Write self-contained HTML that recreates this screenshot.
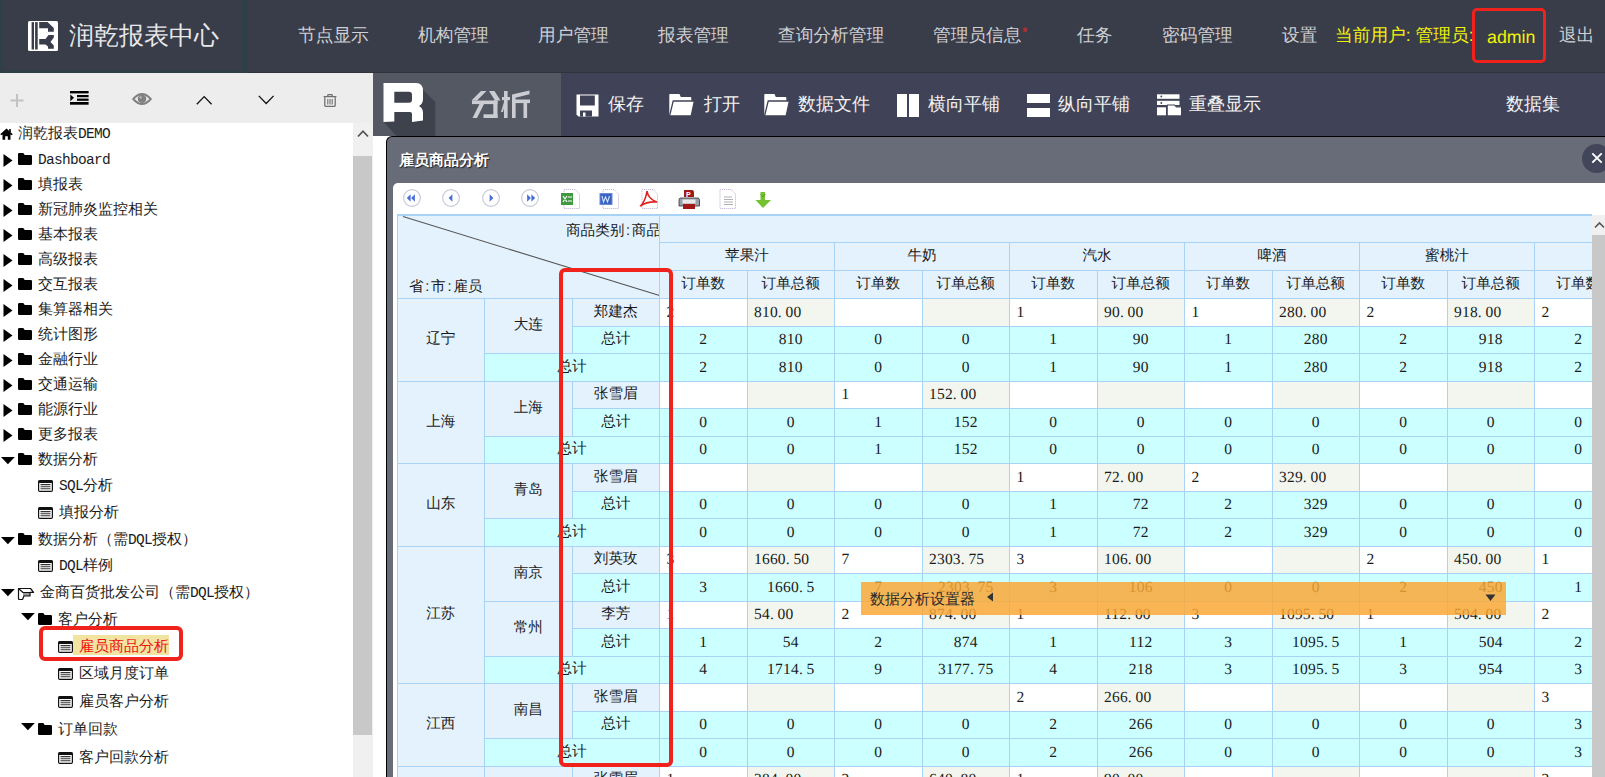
<!DOCTYPE html><html><head><meta charset="utf-8"><style>
*{margin:0;padding:0;box-sizing:border-box}
html,body{width:1605px;height:777px;overflow:hidden;background:#fff;font-family:"Liberation Sans",sans-serif}
.ab{position:absolute}
.nav{position:absolute;top:22px;font-size:17.7px;text-rendering:geometricPrecision;color:#cfd0d4;line-height:26px;white-space:nowrap}
.tb{position:absolute;top:91.3px;font-size:17.6px;color:#f2f2f2;line-height:26px;white-space:nowrap}
.tr{position:absolute;left:0;font-size:15px;color:#1c1c1c;line-height:20px;white-space:nowrap}
.c{position:absolute;font-size:14.6px;text-rendering:geometricPrecision;color:#1a1a1a;white-space:nowrap;overflow:hidden;display:flex;align-items:center}
.mono{font-family:"Liberation Mono",monospace;font-size:14.5px;letter-spacing:-0.7px}
.m{font-family:"Liberation Serif",serif;font-size:15.5px;letter-spacing:0.2px}
</style></head><body>

<div class="ab" style="left:0;top:0;width:1605px;height:73px;background:#393d49;border-bottom:1px solid #30333c"></div>
<div class="ab" style="left:0;top:0;width:248px;height:73px;border-left:3px solid #2f3f46;border-right:6px solid #2f3f46;border-bottom:3px solid #2f3f46;background:#393d49"></div>
<svg class="ab" style="left:28px;top:21px" width="30" height="30" viewBox="0 0 30 30">
<rect x="0" y="0" width="30" height="30" rx="1.5" fill="#fff"/>
<rect x="3.6" y="1.1" width="2.4" height="27.4" fill="#393d49"/>
<rect x="7.1" y="1.1" width="2.6" height="27.4" fill="#393d49"/>
<path d="M11.2,1.1 H19.5 L25.8,7 V10.7 H20 V7.2 H11.2 Z" fill="#393d49"/>
<path d="M11.2,18 H17.5 L20.5,14 H25.8 V16.5 L22.5,21 L25.8,24.5 V27.8 H20 V25.5 L17.5,23.4 H11.2 Z" fill="#393d49"/>
</svg>
<div class="ab" style="left:69px;top:17px;font-size:25px;line-height:36px;color:#e8e8ea;font-weight:300;letter-spacing:0px;white-space:nowrap">润乾报表中心</div>
<div class="nav" style="left:298px">节点显示</div>
<div class="nav" style="left:418px">机构管理</div>
<div class="nav" style="left:538px">用户管理</div>
<div class="nav" style="left:658px">报表管理</div>
<div class="nav" style="left:778px">查询分析管理</div>
<div class="nav" style="left:933px">管理员信息</div>
<div class="nav" style="left:1077px">任务</div>
<div class="nav" style="left:1162px">密码管理</div>
<div class="nav" style="left:1282px">设置</div>
<div class="ab" style="left:1022px;top:22px;font-size:14px;color:#e8262a;line-height:20px">*</div>
<div class="nav" style="left:1335px;color:#f2f20a">当前用户: 管理员:</div>
<div class="nav" style="left:1487px;top:24px;color:#f2f20a;font-size:17.8px">admin</div>
<div class="nav" style="left:1559px">退出</div>
<div class="ab" style="left:1471.5px;top:7.5px;width:74px;height:55.5px;border:3.5px solid #f0221c;border-radius:5px"></div>
<div class="ab" style="left:0;top:73px;width:373px;height:50px;background:#ededed"></div>
<div class="ab" style="left:373px;top:73px;width:1232px;height:63px;background:#404357"></div>
<div class="ab" style="left:373px;top:73px;width:188px;height:63px;background:#535863"></div>
<svg class="ab" style="left:373px;top:73px" width="70" height="63" viewBox="0 0 70 63">
<path d="M45,12 L62.3,29 V63 H23.5 L10.5,49 Z" fill="#3e424d"/><rect x="20" y="18" width="20" height="12.5" fill="#3e424d"/>
<path fill-rule="evenodd" fill="#fff" d="M10.5,10 H43 Q50,10 50,18 V26 Q50,31 46,33 Q50,35 50,40 V47.5 L39,49 V41 Q39,39 37,39 H21.3 V48.5 L10.5,49 Z M21.3,18.8 H36 Q39,18.8 39,22 V26.5 Q39,29.7 36,29.7 H21.3 Z"/>
</svg>
<svg class="ab" style="left:470px;top:89px" width="62" height="31" viewBox="0 0 62 31" fill="#cbcdd2">
<path d="M1.5,11.5 L11,2 H16.5 L7,11.5 Z"/>
<path d="M19,2 H24.5 L30.5,11.5 H25 Z"/>
<rect x="2" y="11.5" width="25.5" height="3.6"/>
<rect x="23.3" y="11.5" width="4.2" height="17.5"/>
<rect x="13.5" y="25.3" width="14" height="3.7"/>
<path d="M9.5,15 H14 L7,29 H2.5 Z"/>
<rect x="34" y="2" width="3.6" height="27"/>
<rect x="32" y="8" width="8" height="3.2"/>
<path d="M34,13 H35.5 L33,23 H31 Z"/>
<path d="M42,5.5 L59.5,1.5 V5.2 L45.5,8.8 Z"/>
<rect x="42" y="6" width="3.6" height="23"/>
<rect x="45" y="10.5" width="15" height="3.6"/>
<rect x="53.5" y="13" width="3.6" height="16"/>
</svg>
<svg class="ab" style="left:575.5px;top:93.5px" width="23" height="23" viewBox="0 0 23 23">
<path d="M0.5,0.5 H22.5 V22.5 H2.5 L0.5,20.5 Z" fill="#fff"/>
<rect x="4" y="1.5" width="14.8" height="10" fill="#404357"/>
<rect x="4" y="16.5" width="12" height="6" fill="#404357"/>
<rect x="7" y="18.5" width="2.5" height="4" fill="#fff"/>
</svg>
<div class="tb" style="left:607.8px">保存</div>
<svg class="ab" style="left:669px;top:94px" width="26" height="22" viewBox="0 0 26 22">
<path d="M0.3,0.8 Q0.3,0 1,0 H10.5 L11.8,3 H21.5 Q22.3,3 22.3,4 V21.7 H0.3 Z" fill="#fff"/>
<path d="M4.2,7 H25.4 L22.2,21.8 H0.6 Z" fill="#fff" stroke="#404357" stroke-width="1.3"/>
</svg>
<div class="tb" style="left:703.6px">打开</div>
<svg class="ab" style="left:764px;top:94px" width="26" height="22" viewBox="0 0 26 22">
<path d="M0.3,0.8 Q0.3,0 1,0 H10.5 L11.8,3 H21.5 Q22.3,3 22.3,4 V21.7 H0.3 Z" fill="#fff"/>
<path d="M4.2,7 H25.4 L22.2,21.8 H0.6 Z" fill="#fff" stroke="#404357" stroke-width="1.3"/>
</svg>
<div class="tb" style="left:797.8px">数据文件</div>
<div class="ab" style="left:897px;top:94px;width:10px;height:22.5px;background:#fff"></div>
<div class="ab" style="left:909px;top:94px;width:10px;height:22.5px;background:#fff"></div>
<div class="tb" style="left:927.8px">横向平铺</div>
<div class="ab" style="left:1027px;top:94px;width:22.5px;height:8.5px;background:#fff"></div>
<div class="ab" style="left:1027px;top:107.5px;width:22.5px;height:9px;background:#fff"></div>
<div class="tb" style="left:1057.7px">纵向平铺</div>
<svg class="ab" style="left:1157px;top:93.5px" width="25" height="22" viewBox="0 0 25 22">
<rect x="0" y="0.3" width="22.5" height="4.5" fill="#fff"/>
<rect x="0" y="6.8" width="22.5" height="4.2" fill="#fff"/>
<circle cx="4.3" cy="2.5" r="0.9" fill="#404357"/><circle cx="4.3" cy="9" r="0.9" fill="#404357"/>
<rect x="0" y="13.3" width="9" height="8" fill="#fff"/>
<path d="M10.8,21.3 V11 H18 L20,12.5 H24 V21.3 Z" fill="#fff" stroke="#404357" stroke-width="0"/>
<path d="M10,11 H17.5 L19.5,12.8 H25" fill="none" stroke="#404357" stroke-width="1.2"/>
</svg>
<div class="tb" style="left:1188.8px">重叠显示</div>
<div class="tb" style="left:1506px">数据集</div>
<div class="ab" style="left:386px;top:136px;width:1240px;height:660px;background:#686c78;border-top:1px solid #000;border-left:1px solid #000;border-radius:6px 0 0 0"></div>
<div class="ab" style="left:399px;top:150px;font-size:14.5px;line-height:20px;font-weight:bold;color:#fff;white-space:nowrap;text-shadow:1px 1px 1px #1e2026">雇员商品分析</div>
<div class="ab" style="left:1582px;top:144px;width:29px;height:29px;border-radius:14.5px;background:#42465a"></div>
<svg class="ab" style="left:1590.5px;top:152px" width="12" height="12" viewBox="0 0 12 12"><path d="M1.3,1.3 L10.7,10.7 M10.7,1.3 L1.3,10.7" stroke="#fff" stroke-width="1.9"/></svg>
<div class="ab" style="left:393px;top:183px;width:1240px;height:620px;background:#fff;border-radius:5px 0 0 0"></div>
<svg class="ab" style="left:10px;top:94px" width="14" height="13" viewBox="0 0 14 13"><path d="M7,0 V13 M0.5,6.5 H13.5" stroke="#c2c2c2" stroke-width="2"/></svg>
<svg class="ab" style="left:70px;top:90px" width="19" height="15" viewBox="0 0 19 15">
<rect x="0" y="1" width="18.6" height="2.4" fill="#000"/>
<rect x="7" y="5" width="11.6" height="2.2" fill="#000"/>
<rect x="7" y="8.6" width="11.6" height="2.2" fill="#000"/>
<rect x="0" y="12" width="18.6" height="2.7" fill="#000"/>
<path d="M0.3,4.5 L4,7.8 L0.3,11.2 Z" fill="#000"/>
</svg>
<svg class="ab" style="left:132px;top:92px" width="20" height="14" viewBox="0 0 20 14">
<path d="M1.2,7 Q10,-3 18.8,7 Q10,17 1.2,7 Z" fill="none" stroke="#808080" stroke-width="1.9"/>
<circle cx="10" cy="6.8" r="4.3" fill="#808080"/><circle cx="8.6" cy="5.4" r="1.2" fill="#b8b8b8"/>
</svg>
<svg class="ab" style="left:196px;top:95px" width="17" height="10" viewBox="0 0 17 10"><path d="M0.8,9.2 L8.2,1.6 L15.6,9.2" fill="none" stroke="#111" stroke-width="1.3"/></svg>
<svg class="ab" style="left:258px;top:95px" width="17" height="10" viewBox="0 0 17 10"><path d="M0.8,0.9 L8.2,8.5 L15.6,0.9" fill="none" stroke="#111" stroke-width="1.3"/></svg>
<svg class="ab" style="left:322.5px;top:94px" width="14" height="13" viewBox="0 0 14 13">
<path d="M0.6,2.6 H13.4 M4.8,2.4 V1.2 Q4.8,0.6 5.4,0.6 H8.6 Q9.2,0.6 9.2,1.2 V2.4" fill="none" stroke="#707070" stroke-width="1.3"/>
<path d="M1.8,3.2 V11.2 Q1.8,12.4 3,12.4 H11 Q12.2,12.4 12.2,11.2 V3.2" fill="none" stroke="#707070" stroke-width="1.3"/>
<path d="M4.8,5 V10.6 M7,5 V10.6 M9.2,5 V10.6" stroke="#707070" stroke-width="1.1"/>
</svg>
<div class="ab" style="left:353px;top:123px;width:20px;height:654px;background:#f0f0f0"></div>
<div class="ab" style="left:353px;top:156px;width:19px;height:579px;background:#c8c8c8"></div>
<svg class="ab" style="left:357px;top:129px" width="12" height="9" viewBox="0 0 12 9"><path d="M1,7.5 L6,2.2 L11,7.5" fill="none" stroke="#555" stroke-width="1.8"/></svg>
<svg class="ab" style="left:0px;top:128px" width="13" height="12" viewBox="0 0 13 12">
<path d="M6.5,0.5 L12.8,6.3 L11.5,7.2 L10.5,6.3 V11.8 H7.8 V8.3 H5.2 V11.8 H2.5 V6.3 L1.5,7.2 L0.2,6.3 Z" fill="#000"/>
<rect x="9.2" y="1" width="1.6" height="3" fill="#000"/>
</svg>
<div class="tr" style="left:18px;top:123.2px;">润乾报表<span class="mono">DEMO</span></div>
<svg class="ab" style="left:3px;top:153.5px" width="10" height="13" viewBox="0 0 10 13"><path d="M0.5,0 L9.5,6.5 L0.5,13 Z" fill="#000"/></svg>
<svg class="ab" style="left:18px;top:152.9px" width="14" height="12" viewBox="0 0 14 12"><path d="M0,1.2 Q0,0 1.2,0 H4.8 Q5.6,0 6,0.8 L6.6,2 H12.8 Q14,2 14,3.2 V10.8 Q14,12 12.8,12 H1.2 Q0,12 0,10.8 Z" fill="#000"/></svg>
<div class="tr" style="left:38px;top:148.7px;"><span class="mono">Dashboard</span></div>
<svg class="ab" style="left:3px;top:178.5px" width="10" height="13" viewBox="0 0 10 13"><path d="M0.5,0 L9.5,6.5 L0.5,13 Z" fill="#000"/></svg>
<svg class="ab" style="left:18px;top:177.9px" width="14" height="12" viewBox="0 0 14 12"><path d="M0,1.2 Q0,0 1.2,0 H4.8 Q5.6,0 6,0.8 L6.6,2 H12.8 Q14,2 14,3.2 V10.8 Q14,12 12.8,12 H1.2 Q0,12 0,10.8 Z" fill="#000"/></svg>
<div class="tr" style="left:38px;top:173.7px;">填报表</div>
<svg class="ab" style="left:3px;top:203.5px" width="10" height="13" viewBox="0 0 10 13"><path d="M0.5,0 L9.5,6.5 L0.5,13 Z" fill="#000"/></svg>
<svg class="ab" style="left:18px;top:202.9px" width="14" height="12" viewBox="0 0 14 12"><path d="M0,1.2 Q0,0 1.2,0 H4.8 Q5.6,0 6,0.8 L6.6,2 H12.8 Q14,2 14,3.2 V10.8 Q14,12 12.8,12 H1.2 Q0,12 0,10.8 Z" fill="#000"/></svg>
<div class="tr" style="left:38px;top:198.7px;">新冠肺炎监控相关</div>
<svg class="ab" style="left:3px;top:228.5px" width="10" height="13" viewBox="0 0 10 13"><path d="M0.5,0 L9.5,6.5 L0.5,13 Z" fill="#000"/></svg>
<svg class="ab" style="left:18px;top:227.9px" width="14" height="12" viewBox="0 0 14 12"><path d="M0,1.2 Q0,0 1.2,0 H4.8 Q5.6,0 6,0.8 L6.6,2 H12.8 Q14,2 14,3.2 V10.8 Q14,12 12.8,12 H1.2 Q0,12 0,10.8 Z" fill="#000"/></svg>
<div class="tr" style="left:38px;top:223.7px;">基本报表</div>
<svg class="ab" style="left:3px;top:253.5px" width="10" height="13" viewBox="0 0 10 13"><path d="M0.5,0 L9.5,6.5 L0.5,13 Z" fill="#000"/></svg>
<svg class="ab" style="left:18px;top:252.9px" width="14" height="12" viewBox="0 0 14 12"><path d="M0,1.2 Q0,0 1.2,0 H4.8 Q5.6,0 6,0.8 L6.6,2 H12.8 Q14,2 14,3.2 V10.8 Q14,12 12.8,12 H1.2 Q0,12 0,10.8 Z" fill="#000"/></svg>
<div class="tr" style="left:38px;top:248.7px;">高级报表</div>
<svg class="ab" style="left:3px;top:278.5px" width="10" height="13" viewBox="0 0 10 13"><path d="M0.5,0 L9.5,6.5 L0.5,13 Z" fill="#000"/></svg>
<svg class="ab" style="left:18px;top:277.9px" width="14" height="12" viewBox="0 0 14 12"><path d="M0,1.2 Q0,0 1.2,0 H4.8 Q5.6,0 6,0.8 L6.6,2 H12.8 Q14,2 14,3.2 V10.8 Q14,12 12.8,12 H1.2 Q0,12 0,10.8 Z" fill="#000"/></svg>
<div class="tr" style="left:38px;top:273.7px;">交互报表</div>
<svg class="ab" style="left:3px;top:303.5px" width="10" height="13" viewBox="0 0 10 13"><path d="M0.5,0 L9.5,6.5 L0.5,13 Z" fill="#000"/></svg>
<svg class="ab" style="left:18px;top:302.9px" width="14" height="12" viewBox="0 0 14 12"><path d="M0,1.2 Q0,0 1.2,0 H4.8 Q5.6,0 6,0.8 L6.6,2 H12.8 Q14,2 14,3.2 V10.8 Q14,12 12.8,12 H1.2 Q0,12 0,10.8 Z" fill="#000"/></svg>
<div class="tr" style="left:38px;top:298.7px;">集算器相关</div>
<svg class="ab" style="left:3px;top:328.5px" width="10" height="13" viewBox="0 0 10 13"><path d="M0.5,0 L9.5,6.5 L0.5,13 Z" fill="#000"/></svg>
<svg class="ab" style="left:18px;top:327.9px" width="14" height="12" viewBox="0 0 14 12"><path d="M0,1.2 Q0,0 1.2,0 H4.8 Q5.6,0 6,0.8 L6.6,2 H12.8 Q14,2 14,3.2 V10.8 Q14,12 12.8,12 H1.2 Q0,12 0,10.8 Z" fill="#000"/></svg>
<div class="tr" style="left:38px;top:323.7px;">统计图形</div>
<svg class="ab" style="left:3px;top:353.5px" width="10" height="13" viewBox="0 0 10 13"><path d="M0.5,0 L9.5,6.5 L0.5,13 Z" fill="#000"/></svg>
<svg class="ab" style="left:18px;top:352.9px" width="14" height="12" viewBox="0 0 14 12"><path d="M0,1.2 Q0,0 1.2,0 H4.8 Q5.6,0 6,0.8 L6.6,2 H12.8 Q14,2 14,3.2 V10.8 Q14,12 12.8,12 H1.2 Q0,12 0,10.8 Z" fill="#000"/></svg>
<div class="tr" style="left:38px;top:348.7px;">金融行业</div>
<svg class="ab" style="left:3px;top:378.5px" width="10" height="13" viewBox="0 0 10 13"><path d="M0.5,0 L9.5,6.5 L0.5,13 Z" fill="#000"/></svg>
<svg class="ab" style="left:18px;top:377.9px" width="14" height="12" viewBox="0 0 14 12"><path d="M0,1.2 Q0,0 1.2,0 H4.8 Q5.6,0 6,0.8 L6.6,2 H12.8 Q14,2 14,3.2 V10.8 Q14,12 12.8,12 H1.2 Q0,12 0,10.8 Z" fill="#000"/></svg>
<div class="tr" style="left:38px;top:373.7px;">交通运输</div>
<svg class="ab" style="left:3px;top:403.5px" width="10" height="13" viewBox="0 0 10 13"><path d="M0.5,0 L9.5,6.5 L0.5,13 Z" fill="#000"/></svg>
<svg class="ab" style="left:18px;top:402.9px" width="14" height="12" viewBox="0 0 14 12"><path d="M0,1.2 Q0,0 1.2,0 H4.8 Q5.6,0 6,0.8 L6.6,2 H12.8 Q14,2 14,3.2 V10.8 Q14,12 12.8,12 H1.2 Q0,12 0,10.8 Z" fill="#000"/></svg>
<div class="tr" style="left:38px;top:398.7px;">能源行业</div>
<svg class="ab" style="left:3px;top:428.5px" width="10" height="13" viewBox="0 0 10 13"><path d="M0.5,0 L9.5,6.5 L0.5,13 Z" fill="#000"/></svg>
<svg class="ab" style="left:18px;top:427.9px" width="14" height="12" viewBox="0 0 14 12"><path d="M0,1.2 Q0,0 1.2,0 H4.8 Q5.6,0 6,0.8 L6.6,2 H12.8 Q14,2 14,3.2 V10.8 Q14,12 12.8,12 H1.2 Q0,12 0,10.8 Z" fill="#000"/></svg>
<div class="tr" style="left:38px;top:423.7px;">更多报表</div>
<svg class="ab" style="left:1.2px;top:456.8px" width="14" height="8" viewBox="0 0 14 8"><path d="M0,0 H13.8 L6.9,7.2 Z" fill="#000"/></svg>
<svg class="ab" style="left:18px;top:452.9px" width="14" height="12" viewBox="0 0 14 12"><path d="M0,1.2 Q0,0 1.2,0 H4.8 Q5.6,0 6,0.8 L6.6,2 H12.8 Q14,2 14,3.2 V10.8 Q14,12 12.8,12 H1.2 Q0,12 0,10.8 Z" fill="#000"/></svg>
<div class="tr" style="left:38px;top:448.7px;">数据分析</div>
<svg class="ab" style="left:38px;top:480px" width="15" height="12" viewBox="0 0 15 12">
<rect x="0.6" y="0.6" width="13.8" height="10.8" rx="1.2" fill="#fff" stroke="#111" stroke-width="1.2"/>
<rect x="0.6" y="0.6" width="13.8" height="2.4" fill="#111"/>
<path d="M2.5,4.6 H12.5 M2.5,6.7 H12.5 M2.5,8.8 H12.5" stroke="#333" stroke-width="1.05"/>
</svg>
<div class="tr" style="left:59px;top:475.2px;"><span class="mono">SQL</span>分析</div>
<svg class="ab" style="left:38px;top:506.5px" width="15" height="12" viewBox="0 0 15 12">
<rect x="0.6" y="0.6" width="13.8" height="10.8" rx="1.2" fill="#fff" stroke="#111" stroke-width="1.2"/>
<rect x="0.6" y="0.6" width="13.8" height="2.4" fill="#111"/>
<path d="M2.5,4.6 H12.5 M2.5,6.7 H12.5 M2.5,8.8 H12.5" stroke="#333" stroke-width="1.05"/>
</svg>
<div class="tr" style="left:59px;top:501.7px;">填报分析</div>
<svg class="ab" style="left:1.2px;top:536.8px" width="14" height="8" viewBox="0 0 14 8"><path d="M0,0 H13.8 L6.9,7.2 Z" fill="#000"/></svg>
<svg class="ab" style="left:18px;top:532.9px" width="14" height="12" viewBox="0 0 14 12"><path d="M0,1.2 Q0,0 1.2,0 H4.8 Q5.6,0 6,0.8 L6.6,2 H12.8 Q14,2 14,3.2 V10.8 Q14,12 12.8,12 H1.2 Q0,12 0,10.8 Z" fill="#000"/></svg>
<div class="tr" style="left:38px;top:528.7px;">数据分析（需<span class="mono">DQL</span>授权）</div>
<svg class="ab" style="left:38px;top:560px" width="15" height="12" viewBox="0 0 15 12">
<rect x="0.6" y="0.6" width="13.8" height="10.8" rx="1.2" fill="#fff" stroke="#111" stroke-width="1.2"/>
<rect x="0.6" y="0.6" width="13.8" height="2.4" fill="#111"/>
<path d="M2.5,4.6 H12.5 M2.5,6.7 H12.5 M2.5,8.8 H12.5" stroke="#333" stroke-width="1.05"/>
</svg>
<div class="tr" style="left:59px;top:555.2px;"><span class="mono">DQL</span>样例</div>
<svg class="ab" style="left:1.2px;top:588.7px" width="14" height="8" viewBox="0 0 14 8"><path d="M0,0 H13.8 L6.9,7.2 Z" fill="#000"/></svg>
<svg class="ab" style="left:17px;top:587px" width="18" height="14" viewBox="0 0 18 14"><rect x="6" y="6" width="7" height="3" fill="#999"/><path d="M1.5,1.5 H13.5 L16.6,5.3 H13 V9 H7 L5.5,12.5 H2.5 Q1.5,12.5 1.5,11.5 Z M2,2 L6,5.5 H13" fill="none" stroke="#111" stroke-width="1.2" stroke-linejoin="round"/></svg>
<div class="tr" style="left:40px;top:581.7px;">金商百货批发公司（需<span class="mono">DQL</span>授权）</div>
<svg class="ab" style="left:21.2px;top:612.7px" width="14" height="8" viewBox="0 0 14 8"><path d="M0,0 H13.8 L6.9,7.2 Z" fill="#000"/></svg>
<svg class="ab" style="left:38px;top:612.9px" width="14" height="12" viewBox="0 0 14 12"><path d="M0,1.2 Q0,0 1.2,0 H4.8 Q5.6,0 6,0.8 L6.6,2 H12.8 Q14,2 14,3.2 V10.8 Q14,12 12.8,12 H1.2 Q0,12 0,10.8 Z" fill="#000"/></svg>
<div class="tr" style="left:58px;top:608.7px;">客户分析</div>
<div class="ab" style="left:73px;top:635px;width:96px;height:20px;background:#f0e4a0"></div>
<svg class="ab" style="left:58px;top:640.5px" width="15" height="12" viewBox="0 0 15 12">
<rect x="0.6" y="0.6" width="13.8" height="10.8" rx="1.2" fill="#fff" stroke="#111" stroke-width="1.2"/>
<rect x="0.6" y="0.6" width="13.8" height="2.4" fill="#111"/>
<path d="M2.5,4.6 H12.5 M2.5,6.7 H12.5 M2.5,8.8 H12.5" stroke="#333" stroke-width="1.05"/>
</svg>
<div class="tr" style="left:79px;top:635.7px;color:#f01010">雇员商品分析</div>
<svg class="ab" style="left:58px;top:668px" width="15" height="12" viewBox="0 0 15 12">
<rect x="0.6" y="0.6" width="13.8" height="10.8" rx="1.2" fill="#fff" stroke="#111" stroke-width="1.2"/>
<rect x="0.6" y="0.6" width="13.8" height="2.4" fill="#111"/>
<path d="M2.5,4.6 H12.5 M2.5,6.7 H12.5 M2.5,8.8 H12.5" stroke="#333" stroke-width="1.05"/>
</svg>
<div class="tr" style="left:79px;top:663.2px;">区域月度订单</div>
<svg class="ab" style="left:58px;top:696px" width="15" height="12" viewBox="0 0 15 12">
<rect x="0.6" y="0.6" width="13.8" height="10.8" rx="1.2" fill="#fff" stroke="#111" stroke-width="1.2"/>
<rect x="0.6" y="0.6" width="13.8" height="2.4" fill="#111"/>
<path d="M2.5,4.6 H12.5 M2.5,6.7 H12.5 M2.5,8.8 H12.5" stroke="#333" stroke-width="1.05"/>
</svg>
<div class="tr" style="left:79px;top:691.2px;">雇员客户分析</div>
<svg class="ab" style="left:21.2px;top:722.7px" width="14" height="8" viewBox="0 0 14 8"><path d="M0,0 H13.8 L6.9,7.2 Z" fill="#000"/></svg>
<svg class="ab" style="left:38px;top:722.9px" width="14" height="12" viewBox="0 0 14 12"><path d="M0,1.2 Q0,0 1.2,0 H4.8 Q5.6,0 6,0.8 L6.6,2 H12.8 Q14,2 14,3.2 V10.8 Q14,12 12.8,12 H1.2 Q0,12 0,10.8 Z" fill="#000"/></svg>
<div class="tr" style="left:58px;top:718.7px;">订单回款</div>
<svg class="ab" style="left:58px;top:752px" width="15" height="12" viewBox="0 0 15 12">
<rect x="0.6" y="0.6" width="13.8" height="10.8" rx="1.2" fill="#fff" stroke="#111" stroke-width="1.2"/>
<rect x="0.6" y="0.6" width="13.8" height="2.4" fill="#111"/>
<path d="M2.5,4.6 H12.5 M2.5,6.7 H12.5 M2.5,8.8 H12.5" stroke="#333" stroke-width="1.05"/>
</svg>
<div class="tr" style="left:79px;top:747.2px;">客户回款分析</div>
<div class="ab" style="left:38.8px;top:626.4px;width:144.5px;height:34.6px;border:4px solid #f0221c;border-radius:6px"></div>
<svg class="ab" style="left:403px;top:189px" width="18" height="18" viewBox="0 0 17 17"><circle cx="8.5" cy="8.5" r="7.9" fill="#fff" stroke="#c8c8d8" stroke-width="1.1"/><path d="M7.2,5 L3.6,8.5 L7.2,12 Z M11.2,5 L7.6,8.5 L11.2,12 Z" fill="#4a6fd8"/></svg>
<svg class="ab" style="left:442px;top:189px" width="18" height="18" viewBox="0 0 17 17"><circle cx="8.5" cy="8.5" r="7.9" fill="#fff" stroke="#c8c8d8" stroke-width="1.1"/><path d="M9.8,5 L6.2,8.5 L9.8,12 Z" fill="#4a6fd8"/></svg>
<svg class="ab" style="left:482px;top:189px" width="18" height="18" viewBox="0 0 17 17"><circle cx="8.5" cy="8.5" r="7.9" fill="#fff" stroke="#c8c8d8" stroke-width="1.1"/><path d="M7.2,5 L10.8,8.5 L7.2,12 Z" fill="#4a6fd8"/></svg>
<svg class="ab" style="left:521px;top:189px" width="18" height="18" viewBox="0 0 17 17"><circle cx="8.5" cy="8.5" r="7.9" fill="#fff" stroke="#c8c8d8" stroke-width="1.1"/><path d="M5.8,5 L9.4,8.5 L5.8,12 Z M9.8,5 L13.4,8.5 L9.8,12 Z" fill="#4a6fd8"/></svg>
<svg class="ab" style="left:560px;top:189px" width="220" height="22" viewBox="0 0 220 22">
<path d="M4,0.5 H15 L19.5,5 V19.5 H4 Z" fill="#fff" stroke="#c8b8d8" stroke-width="1" stroke-dasharray="1.2,0.8"/><rect x="1" y="4" width="12" height="12" fill="#3f9a3f"/><path d="M3,7 L7,13 M7,7 L3,13 M8,8 H12 M8,12 H12" stroke="#fff" stroke-width="1.2"/>
<path d="M43,0.5 H54 L58.5,5 V19.5 H43 Z" fill="#fff" stroke="#c8b8d8" stroke-width="1" stroke-dasharray="1.2,0.8"/><rect x="40" y="4.5" width="12" height="11" fill="#3a63c0" stroke="#6a8ae0" stroke-width="1"/><path d="M42,7 L43.5,13 L45.5,8 L47.5,13 L49.5,7" fill="none" stroke="#cfe0ff" stroke-width="1.1"/>
<path d="M82,0.5 H93 L97.5,5 V19.5 H82 Z" fill="#fff" stroke="#c8b8d8" stroke-width="1" stroke-dasharray="1.2,0.8"/><path d="M81,17 Q86,10 87,2 Q88,10 97,13 Q88,12 80,17" fill="none" stroke="#e02020" stroke-width="1.6"/>
<path d="M124,1 H132 Q134,1 134,4 V8 H124 Z" fill="#a01818"/><text x="126" y="7.5" font-size="7" font-weight="bold" fill="#fff" font-family="Liberation Sans">P</text>
<path d="M120,9 H138 Q139.5,9 139.5,12 V17 H119 V12 Q119,9 120,9 Z" fill="#9aa0a8" stroke="#333" stroke-width="0.8"/><rect x="122.5" y="10.5" width="13" height="4" fill="#e8e8e8"/><rect x="123" y="15" width="12" height="5" fill="#a01818"/>
<path d="M160,0.5 H171 L175.5,5 V19.5 H160 Z" fill="#fff" stroke="#c8b8d8" stroke-width="1" stroke-dasharray="1.2,0.8"/><path d="M164,8 H172 M164,10.5 H173 M164,13 H173 M164,15.5 H173" stroke="#b0b0b8" stroke-width="1"/>
<path d="M200.5,3 H205 V11 H211 L203,19 L195.5,11 H200.5 Z" fill="#74c232"/><path d="M200.5,5 L203,8 L205.5,5" fill="none" stroke="#4e9a1e" stroke-width="0.8"/>
</svg>
<div class="ab" style="left:397px;top:214px;width:1195px;height:563px;background:#e4f2fd"></div>
<div class="c " style="left:397.00px;top:214.00px;width:262.50px;height:84.00px;background:#e4f2fd;justify-content:center;padding-left:0px;"></div>
<svg class="ab" style="left:397px;top:214px" width="263" height="85" viewBox="0 0 263 85"><path d="M6,2.5 L262.5,81.5" stroke="#555" stroke-width="1.1"/></svg>
<div class="ab" style="left:500px;top:217px;width:159.5px;height:28px;overflow:hidden"><div class="c" style="left:0;top:0;width:161px;height:28px;justify-content:flex-end">商品类别<span style="display:inline-block;width:7.5px;text-align:center">:</span>商品</div></div>
<div class="c" style="left:409px;top:273px;width:120px;height:28px;justify-content:flex-start">省<span style="display:inline-block;width:7.5px;text-align:center">:</span>市<span style="display:inline-block;width:7.5px;text-align:center">:</span>雇员</div>
<div class="c " style="left:659.50px;top:214.00px;width:932.50px;height:28.00px;background:#e4f2fd;justify-content:center;padding-left:0px;"></div>
<div class="c " style="left:659.50px;top:242.00px;width:175.00px;height:28.00px;background:#e4f2fd;justify-content:center;padding-left:0px;">苹果汁</div>
<div class="c " style="left:834.50px;top:242.00px;width:175.00px;height:28.00px;background:#e4f2fd;justify-content:center;padding-left:0px;">牛奶</div>
<div class="c " style="left:1009.50px;top:242.00px;width:175.00px;height:28.00px;background:#e4f2fd;justify-content:center;padding-left:0px;">汽水</div>
<div class="c " style="left:1184.50px;top:242.00px;width:175.00px;height:28.00px;background:#e4f2fd;justify-content:center;padding-left:0px;">啤酒</div>
<div class="c " style="left:1359.50px;top:242.00px;width:175.00px;height:28.00px;background:#e4f2fd;justify-content:center;padding-left:0px;">蜜桃汁</div>
<div class="c " style="left:1534.50px;top:242.00px;width:175.00px;height:28.00px;background:#e4f2fd;justify-content:center;padding-left:0px;"></div>
<div class="c " style="left:659.50px;top:270.00px;width:87.50px;height:28.00px;background:#e4f2fd;justify-content:center;padding-left:0px;">订单数</div>
<div class="c " style="left:747.00px;top:270.00px;width:87.50px;height:28.00px;background:#e4f2fd;justify-content:center;padding-left:0px;">订单总额</div>
<div class="c " style="left:834.50px;top:270.00px;width:87.50px;height:28.00px;background:#e4f2fd;justify-content:center;padding-left:0px;">订单数</div>
<div class="c " style="left:922.00px;top:270.00px;width:87.50px;height:28.00px;background:#e4f2fd;justify-content:center;padding-left:0px;">订单总额</div>
<div class="c " style="left:1009.50px;top:270.00px;width:87.50px;height:28.00px;background:#e4f2fd;justify-content:center;padding-left:0px;">订单数</div>
<div class="c " style="left:1097.00px;top:270.00px;width:87.50px;height:28.00px;background:#e4f2fd;justify-content:center;padding-left:0px;">订单总额</div>
<div class="c " style="left:1184.50px;top:270.00px;width:87.50px;height:28.00px;background:#e4f2fd;justify-content:center;padding-left:0px;">订单数</div>
<div class="c " style="left:1272.00px;top:270.00px;width:87.50px;height:28.00px;background:#e4f2fd;justify-content:center;padding-left:0px;">订单总额</div>
<div class="c " style="left:1359.50px;top:270.00px;width:87.50px;height:28.00px;background:#e4f2fd;justify-content:center;padding-left:0px;">订单数</div>
<div class="c " style="left:1447.00px;top:270.00px;width:87.50px;height:28.00px;background:#e4f2fd;justify-content:center;padding-left:0px;">订单总额</div>
<div class="c " style="left:1534.50px;top:270.00px;width:87.50px;height:28.00px;background:#e4f2fd;justify-content:center;padding-left:0px;">订单数</div>
<div class="c " style="left:572.00px;top:298.00px;width:87.50px;height:28.00px;background:#e4f2fd;justify-content:center;padding-left:0px;">郑建杰</div>
<div class="c m" style="left:659.50px;top:298.00px;width:87.50px;height:28.00px;background:#ffffff;justify-content:flex-start;padding-left:7px;"><span style="position:relative;top:0.8px">2</span></div>
<div class="c m" style="left:747.00px;top:298.00px;width:87.50px;height:28.00px;background:#f2f6ee;justify-content:flex-start;padding-left:7px;"><span style="position:relative;top:0.8px">810<span style="display:inline-block;width:7.6px">.</span>00</span></div>
<div class="c m" style="left:834.50px;top:298.00px;width:87.50px;height:28.00px;background:#ffffff;justify-content:flex-start;padding-left:7px;"></div>
<div class="c m" style="left:922.00px;top:298.00px;width:87.50px;height:28.00px;background:#f2f6ee;justify-content:flex-start;padding-left:7px;"></div>
<div class="c m" style="left:1009.50px;top:298.00px;width:87.50px;height:28.00px;background:#ffffff;justify-content:flex-start;padding-left:7px;"><span style="position:relative;top:0.8px">1</span></div>
<div class="c m" style="left:1097.00px;top:298.00px;width:87.50px;height:28.00px;background:#f2f6ee;justify-content:flex-start;padding-left:7px;"><span style="position:relative;top:0.8px">90<span style="display:inline-block;width:7.6px">.</span>00</span></div>
<div class="c m" style="left:1184.50px;top:298.00px;width:87.50px;height:28.00px;background:#ffffff;justify-content:flex-start;padding-left:7px;"><span style="position:relative;top:0.8px">1</span></div>
<div class="c m" style="left:1272.00px;top:298.00px;width:87.50px;height:28.00px;background:#f2f6ee;justify-content:flex-start;padding-left:7px;"><span style="position:relative;top:0.8px">280<span style="display:inline-block;width:7.6px">.</span>00</span></div>
<div class="c m" style="left:1359.50px;top:298.00px;width:87.50px;height:28.00px;background:#ffffff;justify-content:flex-start;padding-left:7px;"><span style="position:relative;top:0.8px">2</span></div>
<div class="c m" style="left:1447.00px;top:298.00px;width:87.50px;height:28.00px;background:#f2f6ee;justify-content:flex-start;padding-left:7px;"><span style="position:relative;top:0.8px">918<span style="display:inline-block;width:7.6px">.</span>00</span></div>
<div class="c m" style="left:1534.50px;top:298.00px;width:87.50px;height:28.00px;background:#ffffff;justify-content:flex-start;padding-left:7px;"><span style="position:relative;top:0.8px">2</span></div>
<div class="c " style="left:572.00px;top:326.00px;width:87.50px;height:27.00px;background:#ccffff;justify-content:center;padding-left:0px;">总计</div>
<div class="c m" style="left:659.50px;top:326.00px;width:87.50px;height:27.00px;background:#ccffff;justify-content:center;padding-left:0px;"><span style="position:relative;top:0.8px">2</span></div>
<div class="c m" style="left:747.00px;top:326.00px;width:87.50px;height:27.00px;background:#ccffff;justify-content:center;padding-left:0px;"><span style="position:relative;top:0.8px">810</span></div>
<div class="c m" style="left:834.50px;top:326.00px;width:87.50px;height:27.00px;background:#ccffff;justify-content:center;padding-left:0px;"><span style="position:relative;top:0.8px">0</span></div>
<div class="c m" style="left:922.00px;top:326.00px;width:87.50px;height:27.00px;background:#ccffff;justify-content:center;padding-left:0px;"><span style="position:relative;top:0.8px">0</span></div>
<div class="c m" style="left:1009.50px;top:326.00px;width:87.50px;height:27.00px;background:#ccffff;justify-content:center;padding-left:0px;"><span style="position:relative;top:0.8px">1</span></div>
<div class="c m" style="left:1097.00px;top:326.00px;width:87.50px;height:27.00px;background:#ccffff;justify-content:center;padding-left:0px;"><span style="position:relative;top:0.8px">90</span></div>
<div class="c m" style="left:1184.50px;top:326.00px;width:87.50px;height:27.00px;background:#ccffff;justify-content:center;padding-left:0px;"><span style="position:relative;top:0.8px">1</span></div>
<div class="c m" style="left:1272.00px;top:326.00px;width:87.50px;height:27.00px;background:#ccffff;justify-content:center;padding-left:0px;"><span style="position:relative;top:0.8px">280</span></div>
<div class="c m" style="left:1359.50px;top:326.00px;width:87.50px;height:27.00px;background:#ccffff;justify-content:center;padding-left:0px;"><span style="position:relative;top:0.8px">2</span></div>
<div class="c m" style="left:1447.00px;top:326.00px;width:87.50px;height:27.00px;background:#ccffff;justify-content:center;padding-left:0px;"><span style="position:relative;top:0.8px">918</span></div>
<div class="c m" style="left:1534.50px;top:326.00px;width:87.50px;height:27.00px;background:#ccffff;justify-content:center;padding-left:0px;"><span style="position:relative;top:0.8px">2</span></div>
<div class="c " style="left:484.50px;top:353.00px;width:175.00px;height:28.00px;background:#ccffff;justify-content:center;padding-left:0px;">总计</div>
<div class="c m" style="left:659.50px;top:353.00px;width:87.50px;height:28.00px;background:#ccffff;justify-content:center;padding-left:0px;"><span style="position:relative;top:0.8px">2</span></div>
<div class="c m" style="left:747.00px;top:353.00px;width:87.50px;height:28.00px;background:#ccffff;justify-content:center;padding-left:0px;"><span style="position:relative;top:0.8px">810</span></div>
<div class="c m" style="left:834.50px;top:353.00px;width:87.50px;height:28.00px;background:#ccffff;justify-content:center;padding-left:0px;"><span style="position:relative;top:0.8px">0</span></div>
<div class="c m" style="left:922.00px;top:353.00px;width:87.50px;height:28.00px;background:#ccffff;justify-content:center;padding-left:0px;"><span style="position:relative;top:0.8px">0</span></div>
<div class="c m" style="left:1009.50px;top:353.00px;width:87.50px;height:28.00px;background:#ccffff;justify-content:center;padding-left:0px;"><span style="position:relative;top:0.8px">1</span></div>
<div class="c m" style="left:1097.00px;top:353.00px;width:87.50px;height:28.00px;background:#ccffff;justify-content:center;padding-left:0px;"><span style="position:relative;top:0.8px">90</span></div>
<div class="c m" style="left:1184.50px;top:353.00px;width:87.50px;height:28.00px;background:#ccffff;justify-content:center;padding-left:0px;"><span style="position:relative;top:0.8px">1</span></div>
<div class="c m" style="left:1272.00px;top:353.00px;width:87.50px;height:28.00px;background:#ccffff;justify-content:center;padding-left:0px;"><span style="position:relative;top:0.8px">280</span></div>
<div class="c m" style="left:1359.50px;top:353.00px;width:87.50px;height:28.00px;background:#ccffff;justify-content:center;padding-left:0px;"><span style="position:relative;top:0.8px">2</span></div>
<div class="c m" style="left:1447.00px;top:353.00px;width:87.50px;height:28.00px;background:#ccffff;justify-content:center;padding-left:0px;"><span style="position:relative;top:0.8px">918</span></div>
<div class="c m" style="left:1534.50px;top:353.00px;width:87.50px;height:28.00px;background:#ccffff;justify-content:center;padding-left:0px;"><span style="position:relative;top:0.8px">2</span></div>
<div class="c " style="left:572.00px;top:381.00px;width:87.50px;height:27.00px;background:#e4f2fd;justify-content:center;padding-left:0px;">张雪眉</div>
<div class="c m" style="left:659.50px;top:381.00px;width:87.50px;height:27.00px;background:#ffffff;justify-content:flex-start;padding-left:7px;"></div>
<div class="c m" style="left:747.00px;top:381.00px;width:87.50px;height:27.00px;background:#f2f6ee;justify-content:flex-start;padding-left:7px;"></div>
<div class="c m" style="left:834.50px;top:381.00px;width:87.50px;height:27.00px;background:#ffffff;justify-content:flex-start;padding-left:7px;"><span style="position:relative;top:0.8px">1</span></div>
<div class="c m" style="left:922.00px;top:381.00px;width:87.50px;height:27.00px;background:#f2f6ee;justify-content:flex-start;padding-left:7px;"><span style="position:relative;top:0.8px">152<span style="display:inline-block;width:7.6px">.</span>00</span></div>
<div class="c m" style="left:1009.50px;top:381.00px;width:87.50px;height:27.00px;background:#ffffff;justify-content:flex-start;padding-left:7px;"></div>
<div class="c m" style="left:1097.00px;top:381.00px;width:87.50px;height:27.00px;background:#f2f6ee;justify-content:flex-start;padding-left:7px;"></div>
<div class="c m" style="left:1184.50px;top:381.00px;width:87.50px;height:27.00px;background:#ffffff;justify-content:flex-start;padding-left:7px;"></div>
<div class="c m" style="left:1272.00px;top:381.00px;width:87.50px;height:27.00px;background:#f2f6ee;justify-content:flex-start;padding-left:7px;"></div>
<div class="c m" style="left:1359.50px;top:381.00px;width:87.50px;height:27.00px;background:#ffffff;justify-content:flex-start;padding-left:7px;"></div>
<div class="c m" style="left:1447.00px;top:381.00px;width:87.50px;height:27.00px;background:#f2f6ee;justify-content:flex-start;padding-left:7px;"></div>
<div class="c m" style="left:1534.50px;top:381.00px;width:87.50px;height:27.00px;background:#ffffff;justify-content:flex-start;padding-left:7px;"></div>
<div class="c " style="left:572.00px;top:408.00px;width:87.50px;height:28.00px;background:#ccffff;justify-content:center;padding-left:0px;">总计</div>
<div class="c m" style="left:659.50px;top:408.00px;width:87.50px;height:28.00px;background:#ccffff;justify-content:center;padding-left:0px;"><span style="position:relative;top:0.8px">0</span></div>
<div class="c m" style="left:747.00px;top:408.00px;width:87.50px;height:28.00px;background:#ccffff;justify-content:center;padding-left:0px;"><span style="position:relative;top:0.8px">0</span></div>
<div class="c m" style="left:834.50px;top:408.00px;width:87.50px;height:28.00px;background:#ccffff;justify-content:center;padding-left:0px;"><span style="position:relative;top:0.8px">1</span></div>
<div class="c m" style="left:922.00px;top:408.00px;width:87.50px;height:28.00px;background:#ccffff;justify-content:center;padding-left:0px;"><span style="position:relative;top:0.8px">152</span></div>
<div class="c m" style="left:1009.50px;top:408.00px;width:87.50px;height:28.00px;background:#ccffff;justify-content:center;padding-left:0px;"><span style="position:relative;top:0.8px">0</span></div>
<div class="c m" style="left:1097.00px;top:408.00px;width:87.50px;height:28.00px;background:#ccffff;justify-content:center;padding-left:0px;"><span style="position:relative;top:0.8px">0</span></div>
<div class="c m" style="left:1184.50px;top:408.00px;width:87.50px;height:28.00px;background:#ccffff;justify-content:center;padding-left:0px;"><span style="position:relative;top:0.8px">0</span></div>
<div class="c m" style="left:1272.00px;top:408.00px;width:87.50px;height:28.00px;background:#ccffff;justify-content:center;padding-left:0px;"><span style="position:relative;top:0.8px">0</span></div>
<div class="c m" style="left:1359.50px;top:408.00px;width:87.50px;height:28.00px;background:#ccffff;justify-content:center;padding-left:0px;"><span style="position:relative;top:0.8px">0</span></div>
<div class="c m" style="left:1447.00px;top:408.00px;width:87.50px;height:28.00px;background:#ccffff;justify-content:center;padding-left:0px;"><span style="position:relative;top:0.8px">0</span></div>
<div class="c m" style="left:1534.50px;top:408.00px;width:87.50px;height:28.00px;background:#ccffff;justify-content:center;padding-left:0px;"><span style="position:relative;top:0.8px">0</span></div>
<div class="c " style="left:484.50px;top:436.00px;width:175.00px;height:27.00px;background:#ccffff;justify-content:center;padding-left:0px;">总计</div>
<div class="c m" style="left:659.50px;top:436.00px;width:87.50px;height:27.00px;background:#ccffff;justify-content:center;padding-left:0px;"><span style="position:relative;top:0.8px">0</span></div>
<div class="c m" style="left:747.00px;top:436.00px;width:87.50px;height:27.00px;background:#ccffff;justify-content:center;padding-left:0px;"><span style="position:relative;top:0.8px">0</span></div>
<div class="c m" style="left:834.50px;top:436.00px;width:87.50px;height:27.00px;background:#ccffff;justify-content:center;padding-left:0px;"><span style="position:relative;top:0.8px">1</span></div>
<div class="c m" style="left:922.00px;top:436.00px;width:87.50px;height:27.00px;background:#ccffff;justify-content:center;padding-left:0px;"><span style="position:relative;top:0.8px">152</span></div>
<div class="c m" style="left:1009.50px;top:436.00px;width:87.50px;height:27.00px;background:#ccffff;justify-content:center;padding-left:0px;"><span style="position:relative;top:0.8px">0</span></div>
<div class="c m" style="left:1097.00px;top:436.00px;width:87.50px;height:27.00px;background:#ccffff;justify-content:center;padding-left:0px;"><span style="position:relative;top:0.8px">0</span></div>
<div class="c m" style="left:1184.50px;top:436.00px;width:87.50px;height:27.00px;background:#ccffff;justify-content:center;padding-left:0px;"><span style="position:relative;top:0.8px">0</span></div>
<div class="c m" style="left:1272.00px;top:436.00px;width:87.50px;height:27.00px;background:#ccffff;justify-content:center;padding-left:0px;"><span style="position:relative;top:0.8px">0</span></div>
<div class="c m" style="left:1359.50px;top:436.00px;width:87.50px;height:27.00px;background:#ccffff;justify-content:center;padding-left:0px;"><span style="position:relative;top:0.8px">0</span></div>
<div class="c m" style="left:1447.00px;top:436.00px;width:87.50px;height:27.00px;background:#ccffff;justify-content:center;padding-left:0px;"><span style="position:relative;top:0.8px">0</span></div>
<div class="c m" style="left:1534.50px;top:436.00px;width:87.50px;height:27.00px;background:#ccffff;justify-content:center;padding-left:0px;"><span style="position:relative;top:0.8px">0</span></div>
<div class="c " style="left:572.00px;top:463.00px;width:87.50px;height:28.00px;background:#e4f2fd;justify-content:center;padding-left:0px;">张雪眉</div>
<div class="c m" style="left:659.50px;top:463.00px;width:87.50px;height:28.00px;background:#ffffff;justify-content:flex-start;padding-left:7px;"></div>
<div class="c m" style="left:747.00px;top:463.00px;width:87.50px;height:28.00px;background:#f2f6ee;justify-content:flex-start;padding-left:7px;"></div>
<div class="c m" style="left:834.50px;top:463.00px;width:87.50px;height:28.00px;background:#ffffff;justify-content:flex-start;padding-left:7px;"></div>
<div class="c m" style="left:922.00px;top:463.00px;width:87.50px;height:28.00px;background:#f2f6ee;justify-content:flex-start;padding-left:7px;"></div>
<div class="c m" style="left:1009.50px;top:463.00px;width:87.50px;height:28.00px;background:#ffffff;justify-content:flex-start;padding-left:7px;"><span style="position:relative;top:0.8px">1</span></div>
<div class="c m" style="left:1097.00px;top:463.00px;width:87.50px;height:28.00px;background:#f2f6ee;justify-content:flex-start;padding-left:7px;"><span style="position:relative;top:0.8px">72<span style="display:inline-block;width:7.6px">.</span>00</span></div>
<div class="c m" style="left:1184.50px;top:463.00px;width:87.50px;height:28.00px;background:#ffffff;justify-content:flex-start;padding-left:7px;"><span style="position:relative;top:0.8px">2</span></div>
<div class="c m" style="left:1272.00px;top:463.00px;width:87.50px;height:28.00px;background:#f2f6ee;justify-content:flex-start;padding-left:7px;"><span style="position:relative;top:0.8px">329<span style="display:inline-block;width:7.6px">.</span>00</span></div>
<div class="c m" style="left:1359.50px;top:463.00px;width:87.50px;height:28.00px;background:#ffffff;justify-content:flex-start;padding-left:7px;"></div>
<div class="c m" style="left:1447.00px;top:463.00px;width:87.50px;height:28.00px;background:#f2f6ee;justify-content:flex-start;padding-left:7px;"></div>
<div class="c m" style="left:1534.50px;top:463.00px;width:87.50px;height:28.00px;background:#ffffff;justify-content:flex-start;padding-left:7px;"></div>
<div class="c " style="left:572.00px;top:491.00px;width:87.50px;height:27.00px;background:#ccffff;justify-content:center;padding-left:0px;">总计</div>
<div class="c m" style="left:659.50px;top:491.00px;width:87.50px;height:27.00px;background:#ccffff;justify-content:center;padding-left:0px;"><span style="position:relative;top:0.8px">0</span></div>
<div class="c m" style="left:747.00px;top:491.00px;width:87.50px;height:27.00px;background:#ccffff;justify-content:center;padding-left:0px;"><span style="position:relative;top:0.8px">0</span></div>
<div class="c m" style="left:834.50px;top:491.00px;width:87.50px;height:27.00px;background:#ccffff;justify-content:center;padding-left:0px;"><span style="position:relative;top:0.8px">0</span></div>
<div class="c m" style="left:922.00px;top:491.00px;width:87.50px;height:27.00px;background:#ccffff;justify-content:center;padding-left:0px;"><span style="position:relative;top:0.8px">0</span></div>
<div class="c m" style="left:1009.50px;top:491.00px;width:87.50px;height:27.00px;background:#ccffff;justify-content:center;padding-left:0px;"><span style="position:relative;top:0.8px">1</span></div>
<div class="c m" style="left:1097.00px;top:491.00px;width:87.50px;height:27.00px;background:#ccffff;justify-content:center;padding-left:0px;"><span style="position:relative;top:0.8px">72</span></div>
<div class="c m" style="left:1184.50px;top:491.00px;width:87.50px;height:27.00px;background:#ccffff;justify-content:center;padding-left:0px;"><span style="position:relative;top:0.8px">2</span></div>
<div class="c m" style="left:1272.00px;top:491.00px;width:87.50px;height:27.00px;background:#ccffff;justify-content:center;padding-left:0px;"><span style="position:relative;top:0.8px">329</span></div>
<div class="c m" style="left:1359.50px;top:491.00px;width:87.50px;height:27.00px;background:#ccffff;justify-content:center;padding-left:0px;"><span style="position:relative;top:0.8px">0</span></div>
<div class="c m" style="left:1447.00px;top:491.00px;width:87.50px;height:27.00px;background:#ccffff;justify-content:center;padding-left:0px;"><span style="position:relative;top:0.8px">0</span></div>
<div class="c m" style="left:1534.50px;top:491.00px;width:87.50px;height:27.00px;background:#ccffff;justify-content:center;padding-left:0px;"><span style="position:relative;top:0.8px">0</span></div>
<div class="c " style="left:484.50px;top:518.00px;width:175.00px;height:28.00px;background:#ccffff;justify-content:center;padding-left:0px;">总计</div>
<div class="c m" style="left:659.50px;top:518.00px;width:87.50px;height:28.00px;background:#ccffff;justify-content:center;padding-left:0px;"><span style="position:relative;top:0.8px">0</span></div>
<div class="c m" style="left:747.00px;top:518.00px;width:87.50px;height:28.00px;background:#ccffff;justify-content:center;padding-left:0px;"><span style="position:relative;top:0.8px">0</span></div>
<div class="c m" style="left:834.50px;top:518.00px;width:87.50px;height:28.00px;background:#ccffff;justify-content:center;padding-left:0px;"><span style="position:relative;top:0.8px">0</span></div>
<div class="c m" style="left:922.00px;top:518.00px;width:87.50px;height:28.00px;background:#ccffff;justify-content:center;padding-left:0px;"><span style="position:relative;top:0.8px">0</span></div>
<div class="c m" style="left:1009.50px;top:518.00px;width:87.50px;height:28.00px;background:#ccffff;justify-content:center;padding-left:0px;"><span style="position:relative;top:0.8px">1</span></div>
<div class="c m" style="left:1097.00px;top:518.00px;width:87.50px;height:28.00px;background:#ccffff;justify-content:center;padding-left:0px;"><span style="position:relative;top:0.8px">72</span></div>
<div class="c m" style="left:1184.50px;top:518.00px;width:87.50px;height:28.00px;background:#ccffff;justify-content:center;padding-left:0px;"><span style="position:relative;top:0.8px">2</span></div>
<div class="c m" style="left:1272.00px;top:518.00px;width:87.50px;height:28.00px;background:#ccffff;justify-content:center;padding-left:0px;"><span style="position:relative;top:0.8px">329</span></div>
<div class="c m" style="left:1359.50px;top:518.00px;width:87.50px;height:28.00px;background:#ccffff;justify-content:center;padding-left:0px;"><span style="position:relative;top:0.8px">0</span></div>
<div class="c m" style="left:1447.00px;top:518.00px;width:87.50px;height:28.00px;background:#ccffff;justify-content:center;padding-left:0px;"><span style="position:relative;top:0.8px">0</span></div>
<div class="c m" style="left:1534.50px;top:518.00px;width:87.50px;height:28.00px;background:#ccffff;justify-content:center;padding-left:0px;"><span style="position:relative;top:0.8px">0</span></div>
<div class="c " style="left:572.00px;top:546.00px;width:87.50px;height:27.00px;background:#e4f2fd;justify-content:center;padding-left:0px;">刘英玫</div>
<div class="c m" style="left:659.50px;top:546.00px;width:87.50px;height:27.00px;background:#ffffff;justify-content:flex-start;padding-left:7px;"><span style="position:relative;top:0.8px">3</span></div>
<div class="c m" style="left:747.00px;top:546.00px;width:87.50px;height:27.00px;background:#f2f6ee;justify-content:flex-start;padding-left:7px;"><span style="position:relative;top:0.8px">1660<span style="display:inline-block;width:7.6px">.</span>50</span></div>
<div class="c m" style="left:834.50px;top:546.00px;width:87.50px;height:27.00px;background:#ffffff;justify-content:flex-start;padding-left:7px;"><span style="position:relative;top:0.8px">7</span></div>
<div class="c m" style="left:922.00px;top:546.00px;width:87.50px;height:27.00px;background:#f2f6ee;justify-content:flex-start;padding-left:7px;"><span style="position:relative;top:0.8px">2303<span style="display:inline-block;width:7.6px">.</span>75</span></div>
<div class="c m" style="left:1009.50px;top:546.00px;width:87.50px;height:27.00px;background:#ffffff;justify-content:flex-start;padding-left:7px;"><span style="position:relative;top:0.8px">3</span></div>
<div class="c m" style="left:1097.00px;top:546.00px;width:87.50px;height:27.00px;background:#f2f6ee;justify-content:flex-start;padding-left:7px;"><span style="position:relative;top:0.8px">106<span style="display:inline-block;width:7.6px">.</span>00</span></div>
<div class="c m" style="left:1184.50px;top:546.00px;width:87.50px;height:27.00px;background:#ffffff;justify-content:flex-start;padding-left:7px;"></div>
<div class="c m" style="left:1272.00px;top:546.00px;width:87.50px;height:27.00px;background:#f2f6ee;justify-content:flex-start;padding-left:7px;"></div>
<div class="c m" style="left:1359.50px;top:546.00px;width:87.50px;height:27.00px;background:#ffffff;justify-content:flex-start;padding-left:7px;"><span style="position:relative;top:0.8px">2</span></div>
<div class="c m" style="left:1447.00px;top:546.00px;width:87.50px;height:27.00px;background:#f2f6ee;justify-content:flex-start;padding-left:7px;"><span style="position:relative;top:0.8px">450<span style="display:inline-block;width:7.6px">.</span>00</span></div>
<div class="c m" style="left:1534.50px;top:546.00px;width:87.50px;height:27.00px;background:#ffffff;justify-content:flex-start;padding-left:7px;"><span style="position:relative;top:0.8px">1</span></div>
<div class="c " style="left:572.00px;top:573.00px;width:87.50px;height:28.00px;background:#ccffff;justify-content:center;padding-left:0px;">总计</div>
<div class="c m" style="left:659.50px;top:573.00px;width:87.50px;height:28.00px;background:#ccffff;justify-content:center;padding-left:0px;"><span style="position:relative;top:0.8px">3</span></div>
<div class="c m" style="left:747.00px;top:573.00px;width:87.50px;height:28.00px;background:#ccffff;justify-content:center;padding-left:0px;"><span style="position:relative;top:0.8px">1660<span style="display:inline-block;width:7.6px">.</span>5</span></div>
<div class="c m" style="left:834.50px;top:573.00px;width:87.50px;height:28.00px;background:#ccffff;justify-content:center;padding-left:0px;"><span style="position:relative;top:0.8px">7</span></div>
<div class="c m" style="left:922.00px;top:573.00px;width:87.50px;height:28.00px;background:#ccffff;justify-content:center;padding-left:0px;"><span style="position:relative;top:0.8px">2303<span style="display:inline-block;width:7.6px">.</span>75</span></div>
<div class="c m" style="left:1009.50px;top:573.00px;width:87.50px;height:28.00px;background:#ccffff;justify-content:center;padding-left:0px;"><span style="position:relative;top:0.8px">3</span></div>
<div class="c m" style="left:1097.00px;top:573.00px;width:87.50px;height:28.00px;background:#ccffff;justify-content:center;padding-left:0px;"><span style="position:relative;top:0.8px">106</span></div>
<div class="c m" style="left:1184.50px;top:573.00px;width:87.50px;height:28.00px;background:#ccffff;justify-content:center;padding-left:0px;"><span style="position:relative;top:0.8px">0</span></div>
<div class="c m" style="left:1272.00px;top:573.00px;width:87.50px;height:28.00px;background:#ccffff;justify-content:center;padding-left:0px;"><span style="position:relative;top:0.8px">0</span></div>
<div class="c m" style="left:1359.50px;top:573.00px;width:87.50px;height:28.00px;background:#ccffff;justify-content:center;padding-left:0px;"><span style="position:relative;top:0.8px">2</span></div>
<div class="c m" style="left:1447.00px;top:573.00px;width:87.50px;height:28.00px;background:#ccffff;justify-content:center;padding-left:0px;"><span style="position:relative;top:0.8px">450</span></div>
<div class="c m" style="left:1534.50px;top:573.00px;width:87.50px;height:28.00px;background:#ccffff;justify-content:center;padding-left:0px;"><span style="position:relative;top:0.8px">1</span></div>
<div class="c " style="left:572.00px;top:601.00px;width:87.50px;height:27.00px;background:#e4f2fd;justify-content:center;padding-left:0px;">李芳</div>
<div class="c m" style="left:659.50px;top:601.00px;width:87.50px;height:27.00px;background:#ffffff;justify-content:flex-start;padding-left:7px;"><span style="position:relative;top:0.8px">1</span></div>
<div class="c m" style="left:747.00px;top:601.00px;width:87.50px;height:27.00px;background:#f2f6ee;justify-content:flex-start;padding-left:7px;"><span style="position:relative;top:0.8px">54<span style="display:inline-block;width:7.6px">.</span>00</span></div>
<div class="c m" style="left:834.50px;top:601.00px;width:87.50px;height:27.00px;background:#ffffff;justify-content:flex-start;padding-left:7px;"><span style="position:relative;top:0.8px">2</span></div>
<div class="c m" style="left:922.00px;top:601.00px;width:87.50px;height:27.00px;background:#f2f6ee;justify-content:flex-start;padding-left:7px;"><span style="position:relative;top:0.8px">874<span style="display:inline-block;width:7.6px">.</span>00</span></div>
<div class="c m" style="left:1009.50px;top:601.00px;width:87.50px;height:27.00px;background:#ffffff;justify-content:flex-start;padding-left:7px;"><span style="position:relative;top:0.8px">1</span></div>
<div class="c m" style="left:1097.00px;top:601.00px;width:87.50px;height:27.00px;background:#f2f6ee;justify-content:flex-start;padding-left:7px;"><span style="position:relative;top:0.8px">112<span style="display:inline-block;width:7.6px">.</span>00</span></div>
<div class="c m" style="left:1184.50px;top:601.00px;width:87.50px;height:27.00px;background:#ffffff;justify-content:flex-start;padding-left:7px;"><span style="position:relative;top:0.8px">3</span></div>
<div class="c m" style="left:1272.00px;top:601.00px;width:87.50px;height:27.00px;background:#f2f6ee;justify-content:flex-start;padding-left:7px;"><span style="position:relative;top:0.8px">1095<span style="display:inline-block;width:7.6px">.</span>50</span></div>
<div class="c m" style="left:1359.50px;top:601.00px;width:87.50px;height:27.00px;background:#ffffff;justify-content:flex-start;padding-left:7px;"><span style="position:relative;top:0.8px">1</span></div>
<div class="c m" style="left:1447.00px;top:601.00px;width:87.50px;height:27.00px;background:#f2f6ee;justify-content:flex-start;padding-left:7px;"><span style="position:relative;top:0.8px">504<span style="display:inline-block;width:7.6px">.</span>00</span></div>
<div class="c m" style="left:1534.50px;top:601.00px;width:87.50px;height:27.00px;background:#ffffff;justify-content:flex-start;padding-left:7px;"><span style="position:relative;top:0.8px">2</span></div>
<div class="c " style="left:572.00px;top:628.00px;width:87.50px;height:28.00px;background:#ccffff;justify-content:center;padding-left:0px;">总计</div>
<div class="c m" style="left:659.50px;top:628.00px;width:87.50px;height:28.00px;background:#ccffff;justify-content:center;padding-left:0px;"><span style="position:relative;top:0.8px">1</span></div>
<div class="c m" style="left:747.00px;top:628.00px;width:87.50px;height:28.00px;background:#ccffff;justify-content:center;padding-left:0px;"><span style="position:relative;top:0.8px">54</span></div>
<div class="c m" style="left:834.50px;top:628.00px;width:87.50px;height:28.00px;background:#ccffff;justify-content:center;padding-left:0px;"><span style="position:relative;top:0.8px">2</span></div>
<div class="c m" style="left:922.00px;top:628.00px;width:87.50px;height:28.00px;background:#ccffff;justify-content:center;padding-left:0px;"><span style="position:relative;top:0.8px">874</span></div>
<div class="c m" style="left:1009.50px;top:628.00px;width:87.50px;height:28.00px;background:#ccffff;justify-content:center;padding-left:0px;"><span style="position:relative;top:0.8px">1</span></div>
<div class="c m" style="left:1097.00px;top:628.00px;width:87.50px;height:28.00px;background:#ccffff;justify-content:center;padding-left:0px;"><span style="position:relative;top:0.8px">112</span></div>
<div class="c m" style="left:1184.50px;top:628.00px;width:87.50px;height:28.00px;background:#ccffff;justify-content:center;padding-left:0px;"><span style="position:relative;top:0.8px">3</span></div>
<div class="c m" style="left:1272.00px;top:628.00px;width:87.50px;height:28.00px;background:#ccffff;justify-content:center;padding-left:0px;"><span style="position:relative;top:0.8px">1095<span style="display:inline-block;width:7.6px">.</span>5</span></div>
<div class="c m" style="left:1359.50px;top:628.00px;width:87.50px;height:28.00px;background:#ccffff;justify-content:center;padding-left:0px;"><span style="position:relative;top:0.8px">1</span></div>
<div class="c m" style="left:1447.00px;top:628.00px;width:87.50px;height:28.00px;background:#ccffff;justify-content:center;padding-left:0px;"><span style="position:relative;top:0.8px">504</span></div>
<div class="c m" style="left:1534.50px;top:628.00px;width:87.50px;height:28.00px;background:#ccffff;justify-content:center;padding-left:0px;"><span style="position:relative;top:0.8px">2</span></div>
<div class="c " style="left:484.50px;top:656.00px;width:175.00px;height:27.00px;background:#ccffff;justify-content:center;padding-left:0px;">总计</div>
<div class="c m" style="left:659.50px;top:656.00px;width:87.50px;height:27.00px;background:#ccffff;justify-content:center;padding-left:0px;"><span style="position:relative;top:0.8px">4</span></div>
<div class="c m" style="left:747.00px;top:656.00px;width:87.50px;height:27.00px;background:#ccffff;justify-content:center;padding-left:0px;"><span style="position:relative;top:0.8px">1714<span style="display:inline-block;width:7.6px">.</span>5</span></div>
<div class="c m" style="left:834.50px;top:656.00px;width:87.50px;height:27.00px;background:#ccffff;justify-content:center;padding-left:0px;"><span style="position:relative;top:0.8px">9</span></div>
<div class="c m" style="left:922.00px;top:656.00px;width:87.50px;height:27.00px;background:#ccffff;justify-content:center;padding-left:0px;"><span style="position:relative;top:0.8px">3177<span style="display:inline-block;width:7.6px">.</span>75</span></div>
<div class="c m" style="left:1009.50px;top:656.00px;width:87.50px;height:27.00px;background:#ccffff;justify-content:center;padding-left:0px;"><span style="position:relative;top:0.8px">4</span></div>
<div class="c m" style="left:1097.00px;top:656.00px;width:87.50px;height:27.00px;background:#ccffff;justify-content:center;padding-left:0px;"><span style="position:relative;top:0.8px">218</span></div>
<div class="c m" style="left:1184.50px;top:656.00px;width:87.50px;height:27.00px;background:#ccffff;justify-content:center;padding-left:0px;"><span style="position:relative;top:0.8px">3</span></div>
<div class="c m" style="left:1272.00px;top:656.00px;width:87.50px;height:27.00px;background:#ccffff;justify-content:center;padding-left:0px;"><span style="position:relative;top:0.8px">1095<span style="display:inline-block;width:7.6px">.</span>5</span></div>
<div class="c m" style="left:1359.50px;top:656.00px;width:87.50px;height:27.00px;background:#ccffff;justify-content:center;padding-left:0px;"><span style="position:relative;top:0.8px">3</span></div>
<div class="c m" style="left:1447.00px;top:656.00px;width:87.50px;height:27.00px;background:#ccffff;justify-content:center;padding-left:0px;"><span style="position:relative;top:0.8px">954</span></div>
<div class="c m" style="left:1534.50px;top:656.00px;width:87.50px;height:27.00px;background:#ccffff;justify-content:center;padding-left:0px;"><span style="position:relative;top:0.8px">3</span></div>
<div class="c " style="left:572.00px;top:683.00px;width:87.50px;height:28.00px;background:#e4f2fd;justify-content:center;padding-left:0px;">张雪眉</div>
<div class="c m" style="left:659.50px;top:683.00px;width:87.50px;height:28.00px;background:#ffffff;justify-content:flex-start;padding-left:7px;"></div>
<div class="c m" style="left:747.00px;top:683.00px;width:87.50px;height:28.00px;background:#f2f6ee;justify-content:flex-start;padding-left:7px;"></div>
<div class="c m" style="left:834.50px;top:683.00px;width:87.50px;height:28.00px;background:#ffffff;justify-content:flex-start;padding-left:7px;"></div>
<div class="c m" style="left:922.00px;top:683.00px;width:87.50px;height:28.00px;background:#f2f6ee;justify-content:flex-start;padding-left:7px;"></div>
<div class="c m" style="left:1009.50px;top:683.00px;width:87.50px;height:28.00px;background:#ffffff;justify-content:flex-start;padding-left:7px;"><span style="position:relative;top:0.8px">2</span></div>
<div class="c m" style="left:1097.00px;top:683.00px;width:87.50px;height:28.00px;background:#f2f6ee;justify-content:flex-start;padding-left:7px;"><span style="position:relative;top:0.8px">266<span style="display:inline-block;width:7.6px">.</span>00</span></div>
<div class="c m" style="left:1184.50px;top:683.00px;width:87.50px;height:28.00px;background:#ffffff;justify-content:flex-start;padding-left:7px;"></div>
<div class="c m" style="left:1272.00px;top:683.00px;width:87.50px;height:28.00px;background:#f2f6ee;justify-content:flex-start;padding-left:7px;"></div>
<div class="c m" style="left:1359.50px;top:683.00px;width:87.50px;height:28.00px;background:#ffffff;justify-content:flex-start;padding-left:7px;"></div>
<div class="c m" style="left:1447.00px;top:683.00px;width:87.50px;height:28.00px;background:#f2f6ee;justify-content:flex-start;padding-left:7px;"></div>
<div class="c m" style="left:1534.50px;top:683.00px;width:87.50px;height:28.00px;background:#ffffff;justify-content:flex-start;padding-left:7px;"><span style="position:relative;top:0.8px">3</span></div>
<div class="c " style="left:572.00px;top:711.00px;width:87.50px;height:27.00px;background:#ccffff;justify-content:center;padding-left:0px;">总计</div>
<div class="c m" style="left:659.50px;top:711.00px;width:87.50px;height:27.00px;background:#ccffff;justify-content:center;padding-left:0px;"><span style="position:relative;top:0.8px">0</span></div>
<div class="c m" style="left:747.00px;top:711.00px;width:87.50px;height:27.00px;background:#ccffff;justify-content:center;padding-left:0px;"><span style="position:relative;top:0.8px">0</span></div>
<div class="c m" style="left:834.50px;top:711.00px;width:87.50px;height:27.00px;background:#ccffff;justify-content:center;padding-left:0px;"><span style="position:relative;top:0.8px">0</span></div>
<div class="c m" style="left:922.00px;top:711.00px;width:87.50px;height:27.00px;background:#ccffff;justify-content:center;padding-left:0px;"><span style="position:relative;top:0.8px">0</span></div>
<div class="c m" style="left:1009.50px;top:711.00px;width:87.50px;height:27.00px;background:#ccffff;justify-content:center;padding-left:0px;"><span style="position:relative;top:0.8px">2</span></div>
<div class="c m" style="left:1097.00px;top:711.00px;width:87.50px;height:27.00px;background:#ccffff;justify-content:center;padding-left:0px;"><span style="position:relative;top:0.8px">266</span></div>
<div class="c m" style="left:1184.50px;top:711.00px;width:87.50px;height:27.00px;background:#ccffff;justify-content:center;padding-left:0px;"><span style="position:relative;top:0.8px">0</span></div>
<div class="c m" style="left:1272.00px;top:711.00px;width:87.50px;height:27.00px;background:#ccffff;justify-content:center;padding-left:0px;"><span style="position:relative;top:0.8px">0</span></div>
<div class="c m" style="left:1359.50px;top:711.00px;width:87.50px;height:27.00px;background:#ccffff;justify-content:center;padding-left:0px;"><span style="position:relative;top:0.8px">0</span></div>
<div class="c m" style="left:1447.00px;top:711.00px;width:87.50px;height:27.00px;background:#ccffff;justify-content:center;padding-left:0px;"><span style="position:relative;top:0.8px">0</span></div>
<div class="c m" style="left:1534.50px;top:711.00px;width:87.50px;height:27.00px;background:#ccffff;justify-content:center;padding-left:0px;"><span style="position:relative;top:0.8px">3</span></div>
<div class="c " style="left:484.50px;top:738.00px;width:175.00px;height:28.00px;background:#ccffff;justify-content:center;padding-left:0px;">总计</div>
<div class="c m" style="left:659.50px;top:738.00px;width:87.50px;height:28.00px;background:#ccffff;justify-content:center;padding-left:0px;"><span style="position:relative;top:0.8px">0</span></div>
<div class="c m" style="left:747.00px;top:738.00px;width:87.50px;height:28.00px;background:#ccffff;justify-content:center;padding-left:0px;"><span style="position:relative;top:0.8px">0</span></div>
<div class="c m" style="left:834.50px;top:738.00px;width:87.50px;height:28.00px;background:#ccffff;justify-content:center;padding-left:0px;"><span style="position:relative;top:0.8px">0</span></div>
<div class="c m" style="left:922.00px;top:738.00px;width:87.50px;height:28.00px;background:#ccffff;justify-content:center;padding-left:0px;"><span style="position:relative;top:0.8px">0</span></div>
<div class="c m" style="left:1009.50px;top:738.00px;width:87.50px;height:28.00px;background:#ccffff;justify-content:center;padding-left:0px;"><span style="position:relative;top:0.8px">2</span></div>
<div class="c m" style="left:1097.00px;top:738.00px;width:87.50px;height:28.00px;background:#ccffff;justify-content:center;padding-left:0px;"><span style="position:relative;top:0.8px">266</span></div>
<div class="c m" style="left:1184.50px;top:738.00px;width:87.50px;height:28.00px;background:#ccffff;justify-content:center;padding-left:0px;"><span style="position:relative;top:0.8px">0</span></div>
<div class="c m" style="left:1272.00px;top:738.00px;width:87.50px;height:28.00px;background:#ccffff;justify-content:center;padding-left:0px;"><span style="position:relative;top:0.8px">0</span></div>
<div class="c m" style="left:1359.50px;top:738.00px;width:87.50px;height:28.00px;background:#ccffff;justify-content:center;padding-left:0px;"><span style="position:relative;top:0.8px">0</span></div>
<div class="c m" style="left:1447.00px;top:738.00px;width:87.50px;height:28.00px;background:#ccffff;justify-content:center;padding-left:0px;"><span style="position:relative;top:0.8px">0</span></div>
<div class="c m" style="left:1534.50px;top:738.00px;width:87.50px;height:28.00px;background:#ccffff;justify-content:center;padding-left:0px;"><span style="position:relative;top:0.8px">3</span></div>
<div class="c " style="left:572.00px;top:766.00px;width:87.50px;height:27.00px;background:#e4f2fd;justify-content:center;padding-left:0px;">张雪眉</div>
<div class="c m" style="left:659.50px;top:766.00px;width:87.50px;height:27.00px;background:#ffffff;justify-content:flex-start;padding-left:7px;"><span style="position:relative;top:0.8px">1</span></div>
<div class="c m" style="left:747.00px;top:766.00px;width:87.50px;height:27.00px;background:#f2f6ee;justify-content:flex-start;padding-left:7px;"><span style="position:relative;top:0.8px">384<span style="display:inline-block;width:7.6px">.</span>00</span></div>
<div class="c m" style="left:834.50px;top:766.00px;width:87.50px;height:27.00px;background:#ffffff;justify-content:flex-start;padding-left:7px;"><span style="position:relative;top:0.8px">2</span></div>
<div class="c m" style="left:922.00px;top:766.00px;width:87.50px;height:27.00px;background:#f2f6ee;justify-content:flex-start;padding-left:7px;"><span style="position:relative;top:0.8px">640<span style="display:inline-block;width:7.6px">.</span>80</span></div>
<div class="c m" style="left:1009.50px;top:766.00px;width:87.50px;height:27.00px;background:#ffffff;justify-content:flex-start;padding-left:7px;"><span style="position:relative;top:0.8px">1</span></div>
<div class="c m" style="left:1097.00px;top:766.00px;width:87.50px;height:27.00px;background:#f2f6ee;justify-content:flex-start;padding-left:7px;"><span style="position:relative;top:0.8px">90<span style="display:inline-block;width:7.6px">.</span>00</span></div>
<div class="c m" style="left:1184.50px;top:766.00px;width:87.50px;height:27.00px;background:#ffffff;justify-content:flex-start;padding-left:7px;"></div>
<div class="c m" style="left:1272.00px;top:766.00px;width:87.50px;height:27.00px;background:#f2f6ee;justify-content:flex-start;padding-left:7px;"></div>
<div class="c m" style="left:1359.50px;top:766.00px;width:87.50px;height:27.00px;background:#ffffff;justify-content:flex-start;padding-left:7px;"></div>
<div class="c m" style="left:1447.00px;top:766.00px;width:87.50px;height:27.00px;background:#f2f6ee;justify-content:flex-start;padding-left:7px;"></div>
<div class="c m" style="left:1534.50px;top:766.00px;width:87.50px;height:27.00px;background:#ffffff;justify-content:flex-start;padding-left:7px;"><span style="position:relative;top:0.8px">2</span></div>
<div class="c " style="left:397.00px;top:298.00px;width:87.50px;height:83.00px;background:#e4f2fd;justify-content:center;padding-left:0px;">辽宁</div>
<div class="c " style="left:397.00px;top:381.00px;width:87.50px;height:82.00px;background:#e4f2fd;justify-content:center;padding-left:0px;">上海</div>
<div class="c " style="left:397.00px;top:463.00px;width:87.50px;height:83.00px;background:#e4f2fd;justify-content:center;padding-left:0px;">山东</div>
<div class="c " style="left:397.00px;top:546.00px;width:87.50px;height:137.00px;background:#e4f2fd;justify-content:center;padding-left:0px;">江苏</div>
<div class="c " style="left:397.00px;top:683.00px;width:87.50px;height:83.00px;background:#e4f2fd;justify-content:center;padding-left:0px;">江西</div>
<div class="c " style="left:397.00px;top:766.00px;width:87.50px;height:82.00px;background:#e4f2fd;justify-content:center;padding-left:0px;"></div>
<div class="c " style="left:484.50px;top:298.00px;width:87.50px;height:55.00px;background:#e4f2fd;justify-content:center;padding-left:0px;">大连</div>
<div class="c " style="left:484.50px;top:381.00px;width:87.50px;height:55.00px;background:#e4f2fd;justify-content:center;padding-left:0px;">上海</div>
<div class="c " style="left:484.50px;top:463.00px;width:87.50px;height:55.00px;background:#e4f2fd;justify-content:center;padding-left:0px;">青岛</div>
<div class="c " style="left:484.50px;top:546.00px;width:87.50px;height:55.00px;background:#e4f2fd;justify-content:center;padding-left:0px;">南京</div>
<div class="c " style="left:484.50px;top:601.00px;width:87.50px;height:55.00px;background:#e4f2fd;justify-content:center;padding-left:0px;">常州</div>
<div class="c " style="left:484.50px;top:683.00px;width:87.50px;height:55.00px;background:#e4f2fd;justify-content:center;padding-left:0px;">南昌</div>
<div class="c " style="left:484.50px;top:766.00px;width:87.50px;height:55.00px;background:#e4f2fd;justify-content:center;padding-left:0px;"></div>
<div class="ab" style="left:397px;top:214px;width:1195px;height:2px;background:#a9d3f5"></div>
<div class="ab" style="left:397.00px;top:214.00px;width:1px;height:563.00px;background:#a9d3f5"></div>
<div class="ab" style="left:659.00px;top:214.00px;width:1px;height:563.00px;background:#a9d3f5"></div>
<div class="ab" style="left:659.50px;top:242.00px;width:932.50px;height:1px;background:#a9d3f5"></div>
<div class="ab" style="left:659.50px;top:270.00px;width:932.50px;height:1px;background:#a9d3f5"></div>
<div class="ab" style="left:397.00px;top:298.00px;width:1195.00px;height:1px;background:#a9d3f5"></div>
<div class="ab" style="left:834.00px;top:242.00px;width:1px;height:535.00px;background:#a9d3f5"></div>
<div class="ab" style="left:1009.00px;top:242.00px;width:1px;height:535.00px;background:#a9d3f5"></div>
<div class="ab" style="left:1184.00px;top:242.00px;width:1px;height:535.00px;background:#a9d3f5"></div>
<div class="ab" style="left:1359.00px;top:242.00px;width:1px;height:535.00px;background:#a9d3f5"></div>
<div class="ab" style="left:1534.00px;top:242.00px;width:1px;height:535.00px;background:#a9d3f5"></div>
<div class="ab" style="left:747.00px;top:270.00px;width:1px;height:507.00px;background:#a9d3f5"></div>
<div class="ab" style="left:922.00px;top:270.00px;width:1px;height:507.00px;background:#a9d3f5"></div>
<div class="ab" style="left:1097.00px;top:270.00px;width:1px;height:507.00px;background:#a9d3f5"></div>
<div class="ab" style="left:1272.00px;top:270.00px;width:1px;height:507.00px;background:#a9d3f5"></div>
<div class="ab" style="left:1447.00px;top:270.00px;width:1px;height:507.00px;background:#a9d3f5"></div>
<div class="ab" style="left:1622.00px;top:270.00px;width:1px;height:507.00px;background:#a9d3f5"></div>
<div class="ab" style="left:572.00px;top:326.00px;width:1020.00px;height:1px;background:#a9d3f5"></div>
<div class="ab" style="left:484.50px;top:353.00px;width:1107.50px;height:1px;background:#a9d3f5"></div>
<div class="ab" style="left:397.00px;top:381.00px;width:1195.00px;height:1px;background:#a9d3f5"></div>
<div class="ab" style="left:572.00px;top:408.00px;width:1020.00px;height:1px;background:#a9d3f5"></div>
<div class="ab" style="left:484.50px;top:436.00px;width:1107.50px;height:1px;background:#a9d3f5"></div>
<div class="ab" style="left:397.00px;top:463.00px;width:1195.00px;height:1px;background:#a9d3f5"></div>
<div class="ab" style="left:572.00px;top:491.00px;width:1020.00px;height:1px;background:#a9d3f5"></div>
<div class="ab" style="left:484.50px;top:518.00px;width:1107.50px;height:1px;background:#a9d3f5"></div>
<div class="ab" style="left:397.00px;top:546.00px;width:1195.00px;height:1px;background:#a9d3f5"></div>
<div class="ab" style="left:572.00px;top:573.00px;width:1020.00px;height:1px;background:#a9d3f5"></div>
<div class="ab" style="left:484.50px;top:601.00px;width:1107.50px;height:1px;background:#a9d3f5"></div>
<div class="ab" style="left:572.00px;top:628.00px;width:1020.00px;height:1px;background:#a9d3f5"></div>
<div class="ab" style="left:484.50px;top:656.00px;width:1107.50px;height:1px;background:#a9d3f5"></div>
<div class="ab" style="left:397.00px;top:683.00px;width:1195.00px;height:1px;background:#a9d3f5"></div>
<div class="ab" style="left:572.00px;top:711.00px;width:1020.00px;height:1px;background:#a9d3f5"></div>
<div class="ab" style="left:484.50px;top:738.00px;width:1107.50px;height:1px;background:#a9d3f5"></div>
<div class="ab" style="left:397.00px;top:766.00px;width:1195.00px;height:1px;background:#a9d3f5"></div>
<div class="ab" style="left:484.00px;top:298.00px;width:1px;height:55.00px;background:#a9d3f5"></div>
<div class="ab" style="left:572.00px;top:298.00px;width:1px;height:55.00px;background:#a9d3f5"></div>
<div class="ab" style="left:484.00px;top:381.00px;width:1px;height:55.00px;background:#a9d3f5"></div>
<div class="ab" style="left:572.00px;top:381.00px;width:1px;height:55.00px;background:#a9d3f5"></div>
<div class="ab" style="left:484.00px;top:463.00px;width:1px;height:55.00px;background:#a9d3f5"></div>
<div class="ab" style="left:572.00px;top:463.00px;width:1px;height:55.00px;background:#a9d3f5"></div>
<div class="ab" style="left:484.00px;top:546.00px;width:1px;height:55.00px;background:#a9d3f5"></div>
<div class="ab" style="left:572.00px;top:546.00px;width:1px;height:55.00px;background:#a9d3f5"></div>
<div class="ab" style="left:484.00px;top:601.00px;width:1px;height:55.00px;background:#a9d3f5"></div>
<div class="ab" style="left:572.00px;top:601.00px;width:1px;height:55.00px;background:#a9d3f5"></div>
<div class="ab" style="left:484.00px;top:683.00px;width:1px;height:55.00px;background:#a9d3f5"></div>
<div class="ab" style="left:572.00px;top:683.00px;width:1px;height:55.00px;background:#a9d3f5"></div>
<div class="ab" style="left:484.00px;top:766.00px;width:1px;height:55.00px;background:#a9d3f5"></div>
<div class="ab" style="left:572.00px;top:766.00px;width:1px;height:55.00px;background:#a9d3f5"></div>
<div class="ab" style="left:484.00px;top:298.00px;width:1px;height:83.00px;background:#a9d3f5"></div>
<div class="ab" style="left:484.00px;top:381.00px;width:1px;height:82.00px;background:#a9d3f5"></div>
<div class="ab" style="left:484.00px;top:463.00px;width:1px;height:83.00px;background:#a9d3f5"></div>
<div class="ab" style="left:484.00px;top:546.00px;width:1px;height:137.00px;background:#a9d3f5"></div>
<div class="ab" style="left:484.00px;top:683.00px;width:1px;height:83.00px;background:#a9d3f5"></div>
<div class="ab" style="left:484.00px;top:766.00px;width:1px;height:82.00px;background:#a9d3f5"></div>
<div class="ab" style="left:1592px;top:215px;width:13px;height:562px;background:#f0f0f0"></div>
<div class="ab" style="left:1592px;top:235px;width:13px;height:542px;background:#c8c8c8"></div>
<svg class="ab" style="left:1594px;top:221px" width="11" height="8" viewBox="0 0 11 8"><path d="M1,6.5 L5.5,2 L10,6.5" fill="none" stroke="#555" stroke-width="1.6"/></svg>
<div class="ab" style="left:861px;top:582px;width:645px;height:32.7px;background:rgba(250,167,52,0.84)"></div>
<div class="ab" style="left:870px;top:587px;font-size:15px;line-height:24px;color:#2a2a2a;white-space:nowrap">数据分析设置器</div>
<svg class="ab" style="left:986px;top:592px" width="8" height="10" viewBox="0 0 8 10"><path d="M7,0.5 V9.5 L1,5 Z" fill="#333"/></svg>
<svg class="ab" style="left:1485px;top:594px" width="11" height="8" viewBox="0 0 11 8"><path d="M0.5,0.5 H10.5 L5.5,7 Z" fill="#333"/></svg>
<div class="ab" style="left:558.5px;top:267.5px;width:114px;height:499.5px;border:4px solid #f0221c;border-radius:6px"></div>
</body></html>
